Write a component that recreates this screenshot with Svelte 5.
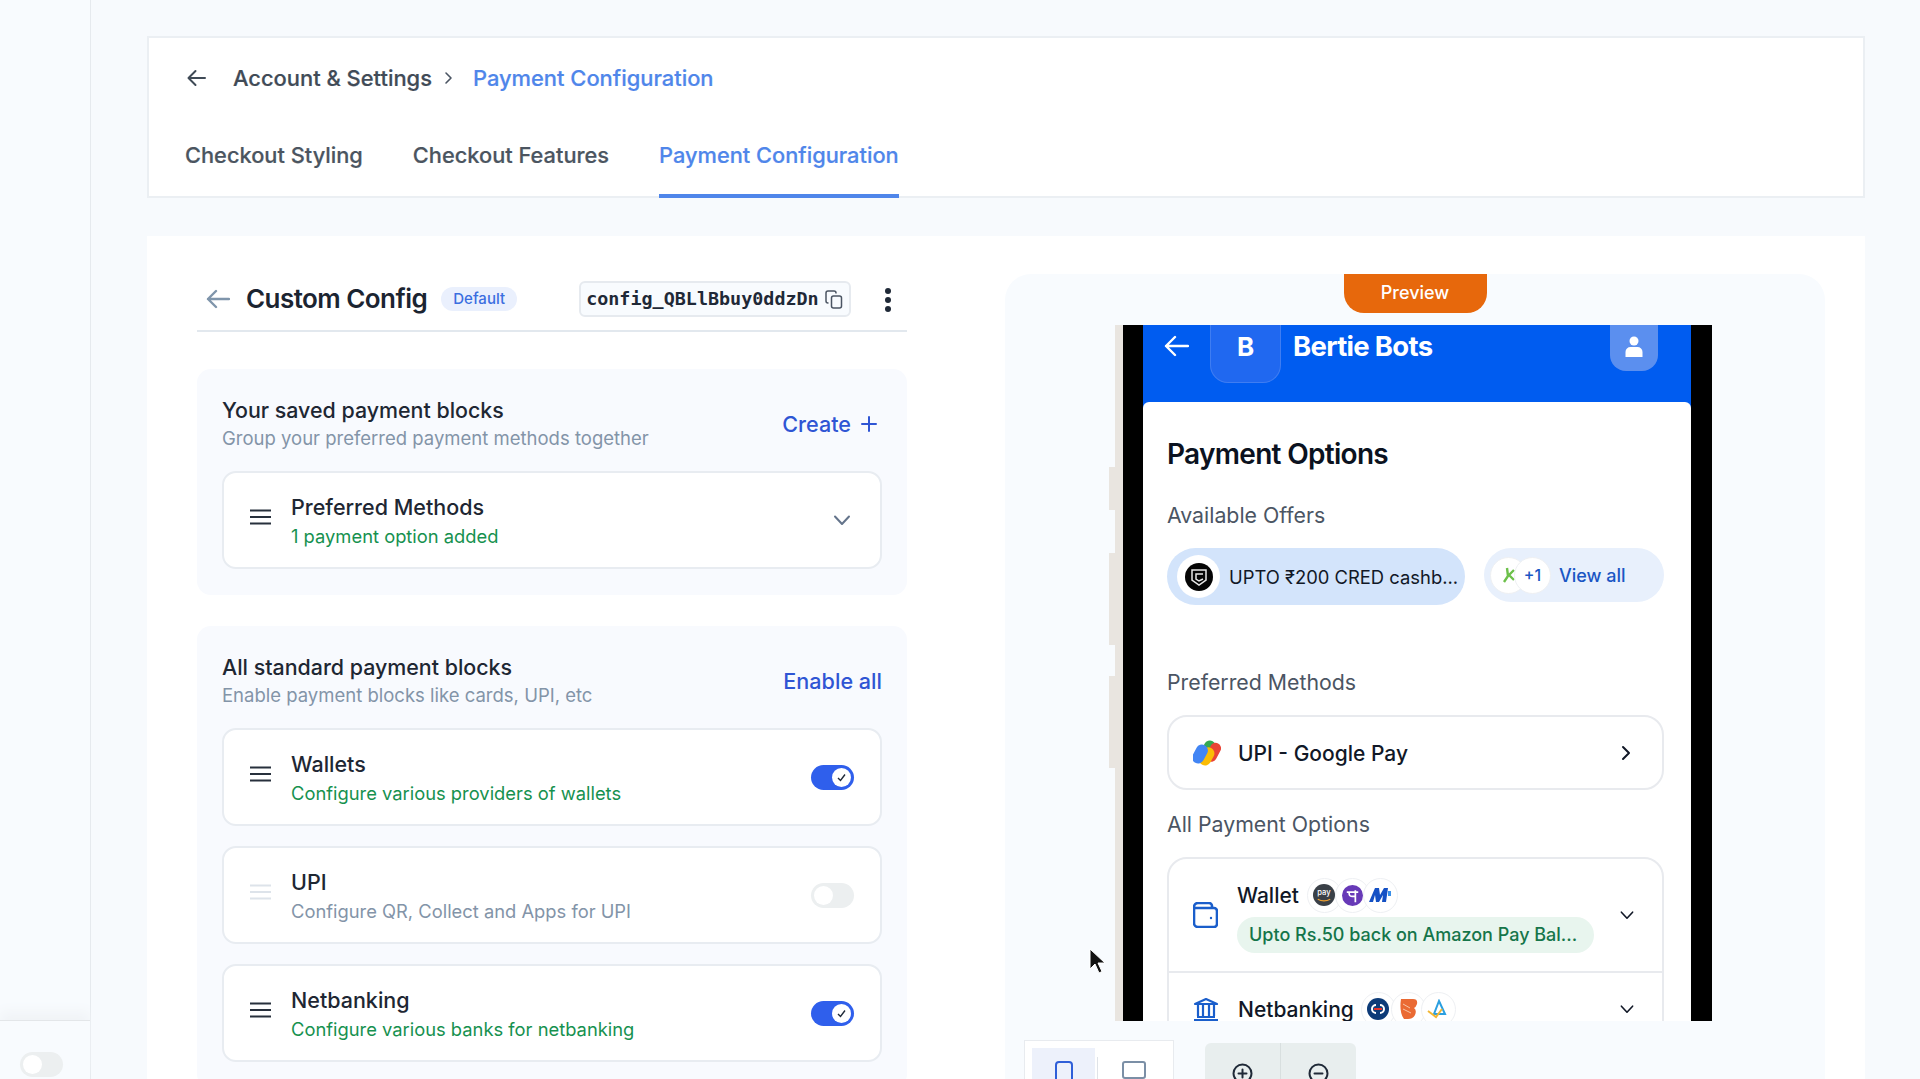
<script>
  const tabs = ['Checkout Styling', 'Checkout Features', 'Payment Configuration']
  const blocks = [
    { name: 'Wallets', desc: 'Configure various providers of wallets', on: true },
    { name: 'UPI', desc: 'Configure QR, Collect and Apps for UPI', on: false },
    { name: 'Netbanking', desc: 'Configure various banks for netbanking', on: true }
  ]
</script>

{#snippet burger(off)}
  <svg class="burger" class:off width="21" height="16" viewBox="0 0 21 16">
    <path d="M0 1.5h21M0 8h21M0 14.500h21" stroke="currentColor" stroke-width="2" fill="none" />
  </svg>
{/snippet}

{#snippet chevronDown(w, color)}
  <svg width={w} height={w} viewBox="0 0 20 20" fill="none" stroke={color} stroke-width="2" stroke-linecap="round" stroke-linejoin="round">
    <path d="M3 6.500l7 7.500 7-7.500" />
  </svg>
{/snippet}

<div class="app">
  <aside class="sidebar">
    <div class="sidebar-foot">
      <span class="toggle"><i></i></span>
    </div>
  </aside>

  <main class="main">
    <section class="topcard">
      <div class="crumbs">
        <svg class="crumb-back" width="19" height="18" viewBox="0 0 19 18" fill="none" stroke="#3f4a56" stroke-width="2" stroke-linecap="round" stroke-linejoin="round">
          <path d="M18 9H2M8.500 2L1.500 9l7 7" />
        </svg>
        <span class="crumb">Account &amp; Settings</span>
        <svg class="crumb-sep" width="9" height="14" viewBox="0 0 9 14" fill="none" stroke="#4b5563" stroke-width="1.600" stroke-linecap="round" stroke-linejoin="round">
          <path d="M2 2l5 5-5 5" />
        </svg>
        <span class="crumb active">Payment Configuration</span>
      </div>
      <nav class="tabs">
        {#each tabs as t, i}
          <span class="tab" class:current={i === 2}>{t}</span>
        {/each}
      </nav>
    </section>

    <section class="maincard">
      <div class="left">
        <header class="config-head">
          <svg class="config-back" width="24" height="20" viewBox="0 0 24 20" fill="none" stroke="#7f95ab" stroke-width="2.400" stroke-linecap="round" stroke-linejoin="round">
            <path d="M23 10H2M10 2l-8 8 8 8" />
          </svg>
          <h1>Custom Config</h1>
          <span class="badge">Default</span>
          <span class="code">
            config_QBLlBbuy0ddzDn
            <svg width="18" height="19" viewBox="0 0 18 19" fill="none" stroke="#4b5563" stroke-width="1.500" stroke-linejoin="round">
              <rect x="6.500" y="6" width="10" height="12" rx="2" />
              <path d="M3.500 13H3a2 2 0 0 1-2-2V3a2 2 0 0 1 2-2h6a2 2 0 0 1 2 2v.500" />
            </svg>
          </span>
          <span class="dots"><i></i><i></i><i></i></span>
        </header>

        <div class="block">
          <div class="block-head">
            <div>
              <h2>Your saved payment blocks</h2>
              <p>Group your preferred payment methods together</p>
            </div>
            <span class="link">Create
              <svg class="plus-icon" width="18" height="18" viewBox="0 0 18 18" stroke="#2f55d4" stroke-width="2" stroke-linecap="round"><path d="M9 2v14M2 9h14" /></svg>
            </span>
          </div>
          <div class="item">
            {@render burger(false)}
            <div class="item-text">
              <h3>Preferred Methods</h3>
              <p class="green">1 payment option added</p>
            </div>
            <span class="item-chev">{@render chevronDown(20, '#64748b')}</span>
          </div>
        </div>

        <div class="block">
          <div class="block-head">
            <div>
              <h2>All standard payment blocks</h2>
              <p>Enable payment blocks like cards, UPI, etc</p>
            </div>
            <span class="link">Enable all</span>
          </div>
          <div class="items">
            {#each blocks as b}
              <div class="item">
                {@render burger(!b.on)}
                <div class="item-text">
                  <h3>{b.name}</h3>
                  <p class:green={b.on}>{b.desc}</p>
                </div>
                <span class="toggle" class:on={b.on}>
                  <i>{#if b.on}<svg width="11" height="11" viewBox="0 0 11 11" fill="none" stroke="#1f2937" stroke-width="1.400"><path d="M2 6l2.500 2.500L9 2.500" /></svg>{/if}</i>
                </span>
              </div>
            {/each}
          </div>
        </div>
      </div>

      <div class="preview">
        <div class="preview-tab">Preview</div>
        <div class="phone">
          <span class="side-btn b1"></span>
          <span class="side-btn b2"></span>
          <span class="side-btn b3"></span>
          <div class="screen">
            <div class="bar">
              <svg class="bar-back" width="25" height="22" viewBox="0 0 25 22" fill="none" stroke="#fff" stroke-width="2.400" stroke-linecap="round" stroke-linejoin="round">
                <path d="M24 11H2M11 2l-9 9 9 9" />
              </svg>
              <div class="logo">B</div>
              <div class="merchant">Bertie Bots</div>
              <div class="avatar">
                <svg width="20" height="22" viewBox="0 0 20 22" fill="#fff"><circle cx="10" cy="5" r="4.500" /><path d="M1.500 21v-5a5 5 0 0 1 5-5h7a5 5 0 0 1 5 5v5z" /></svg>
              </div>
            </div>
            <div class="sheet">
              <h2 class="sheet-title">Payment Options</h2>
              <div class="sheet-label first">Available Offers</div>
              <div class="offers">
                <div class="offer">
                  <span class="offer-icon">
                    <svg width="28" height="28" viewBox="0 0 28 28">
                      <circle cx="14" cy="14" r="14" fill="#050505" />
                      <path d="M7 7h14v10l-7 5-7-5z" fill="none" stroke="#e8e8e8" stroke-width="1.500" />
                      <path d="M18 11h-7v5l3 2 4-2" fill="none" stroke="#e8e8e8" stroke-width="1.500" />
                    </svg>
                  </span>
                  <span>UPTO ₹200 CRED cashb...</span>
                </div>
                <div class="viewall">
                  <span class="stack">
                    <span class="mini">
                      <svg width="14" height="16" viewBox="0 0 14 16" fill="none" stroke="#6cc04a" stroke-width="2.400"><path d="M5 1l1 8-4 6M12 3L7 8l5 5" /></svg>
                    </span>
                    <span class="mini plus">+1</span>
                  </span>
                  <span class="viewall-text">View all</span>
                </div>
              </div>

              <div class="sheet-label pref">Preferred Methods</div>
              <div class="gpay">
                <svg width="28" height="26" viewBox="0 0 28 26">
                  <rect x="9" y="0" width="12" height="20" rx="6" transform="rotate(28 15 10)" fill="#34a853" />
                  <rect x="15" y="2" width="11" height="20" rx="5.500" transform="rotate(28 20 12)" fill="#ea4335" />
                  <rect x="8" y="7" width="12" height="19" rx="6" transform="rotate(28 14 16)" fill="#fbbc04" />
                  <rect x="1" y="4" width="12" height="20" rx="6" transform="rotate(28 7 14)" fill="#4285f4" />
                </svg>
                <span class="gpay-name">UPI - Google Pay</span>
                <svg width="10" height="16" viewBox="0 0 10 16" fill="none" stroke="#111827" stroke-width="2" stroke-linecap="round" stroke-linejoin="round"><path d="M2 2l6 6-6 6" /></svg>
              </div>

              <div class="sheet-label all">All Payment Options</div>
              <div class="methods">
                <div class="method wallet">
                  <svg width="25" height="26" viewBox="0 0 25 26" fill="none" stroke="#1a5ecb" stroke-width="2.600" stroke-linejoin="round">
                    <path d="M19 6V4a3 3 0 0 0-3-3H5a4 4 0 0 0-4 4v16a4 4 0 0 0 4 4h16a3 3 0 0 0 3-3V9a3 3 0 0 0-3-3H1" />
                    <circle cx="18" cy="16" r="1.200" fill="#1a5ecb" stroke="none" />
                  </svg>
                  <div class="method-text">
                    <div class="method-title">
                      <span>Wallet</span>
                      <span class="logos wallet-logos">
                        <span class="mini">
                          <svg width="22" height="22" viewBox="0 0 23 23">
                            <circle cx="11.500" cy="11.500" r="11.500" fill="#3a4047" />
                            <text x="11.500" y="12" text-anchor="middle" font-size="8" fill="#fff" font-family="Inter">pay</text>
                            <path d="M5 16q6.500 3.500 13 0" stroke="#f0a030" stroke-width="1.300" fill="none" />
                          </svg>
                        </span>
                        <span class="mini">
                          <svg width="21" height="21" viewBox="0 0 22 22">
                            <circle cx="11" cy="11" r="11" fill="#6739b7" />
                            <path d="M5 7.500h12M7.500 7.500q-.5 4.500 3 4.500h3.500M14 5.500V18" stroke="#fff" stroke-width="1.800" fill="none" />
                          </svg>
                        </span>
                        <span class="mini">
                          <svg width="23" height="16" viewBox="0 0 23 16">
                            <path d="M0 15L6 1h4l1 7 4-7h4l-2 14h-4l1-7-4 7H7l-1-7-2 7z" fill="#1450c4" />
                            <path d="M19 4h3v5h-3z" fill="#3a8fe8" />
                          </svg>
                        </span>
                      </span>
                    </div>
                    <div class="method-offer">Upto Rs.50 back on Amazon Pay Bal...</div>
                  </div>
                  {@render chevronDown(16, '#111827')}
                </div>
                <div class="method bank">
                  <svg width="26" height="24" viewBox="0 0 26 24" fill="none" stroke="#1a5ecb" stroke-width="2.200" stroke-linejoin="round">
                    <path d="M2 7l11-5 11 5zM1 23h24M4 20h18M5 8v11M10 8v11M16 8v11M21 8v11" />
                  </svg>
                  <div class="method-title">
                    <span>Netbanking</span>
                    <span class="logos bank-logos">
                      <span class="mini">
                        <svg width="22" height="22" viewBox="0 0 22 22">
                          <circle cx="11" cy="11" r="11" fill="#0d3b78" />
                          <path d="M9 7a4 4 0 1 0 0 8M13 7a4 4 0 1 1 0 8" stroke="#fff" stroke-width="2" fill="none" />
                          <path d="M7 11h8" stroke="#e3332c" stroke-width="2" />
                        </svg>
                      </span>
                      <span class="mini">
                        <svg width="22" height="22" viewBox="0 0 22 22">
                          <path d="M4 1h12q5 0 4 5-1 3-3 4 3 2 1 7-2 4-7 4H7Q2 14 4 1z" fill="#ea6a33" />
                          <path d="M6 6l7 4M6 11l8 4" stroke="#f7c6a8" stroke-width="1" />
                        </svg>
                      </span>
                      <span class="mini">
                        <svg width="22" height="20" viewBox="0 0 22 20" fill="none" stroke-width="2">
                          <path d="M12 2l6 13H7z" stroke="#2b9fe0" />
                          <path d="M1 12l8 6 6-8" stroke="#f2b632" />
                        </svg>
                      </span>
                    </span>
                  </div>
                  {@render chevronDown(16, '#111827')}
                </div>
              </div>
            </div>
          </div>
        </div>

        <div class="tools">
          <div class="devices">
            <span class="device active">
              <svg width="18" height="28" viewBox="0 0 18 28" fill="none" stroke="#2f5fd8" stroke-width="2"><rect x="1" y="1" width="16" height="26" rx="3" /></svg>
            </span>
            <span class="device-sep"></span>
            <span class="device">
              <svg width="24" height="24" viewBox="0 0 24 24" fill="none" stroke="#7b8fa6" stroke-width="2"><rect x="1" y="1" width="22" height="16" rx="2" /><path d="M12 17v5M7 22h10" /></svg>
            </span>
          </div>
          <div class="zoomer">
            <span class="zoom-btn">
              <svg width="22" height="24" viewBox="0 0 22 24" fill="none" stroke="#1f2937" stroke-width="2" stroke-linecap="round"><circle cx="10.500" cy="10.500" r="9" /><path d="M6.500 10.500h8M10.500 6.500v8M17 17l4 4" /></svg>
            </span>
            <span class="zoom-btn">
              <svg width="22" height="24" viewBox="0 0 22 24" fill="none" stroke="#1f2937" stroke-width="2" stroke-linecap="round"><circle cx="10.500" cy="10.500" r="9" /><path d="M6.500 10.500h8M17 17l4 4" /></svg>
            </span>
          </div>
        </div>

        <svg class="cursor" width="17" height="26" viewBox="0 0 17 26">
          <path d="M1 1v20l5-5 4 9 3-1.500-4-8.500h7z" fill="#111" stroke="#fff" stroke-width="1" />
        </svg>
      </div>
    </section>
  </main>
</div>

<style>
  :global(body) {
    background: #f8fbfe;
    font-family: Inter, "Liberation Sans", sans-serif;
    color: #1f2937;
  }

  h1, h2, h3, p { margin: 0; }

  .app {
    display: flex;
    height: 1079px;
    overflow: hidden;
  }

  .sidebar {
    width: 90px;
    flex: none;
    border-right: 1px solid #e6eaee;
    display: flex;
    flex-direction: column;
    justify-content: flex-end;
  }

  .sidebar-foot {
    height: 59px;
    box-sizing: border-box;
    border-top: 1px solid #e3e6e9;
    box-shadow: 0 -8px 12px #f0f3f6;
    padding: 31px 0 0 20px;
  }

  .main {
    flex: 1;
    min-width: 0;
    padding: 36px 55px 0 56px;
    background: #f7fafd;
  }

  .topcard {
    height: 162px;
    box-sizing: border-box;
    background: #fff;
    border: 2px solid #ebeff3;
    display: flex;
    flex-direction: column;
    padding-left: 36px;
  }

  .crumbs {
    height: 80px;
    flex: none;
    display: flex;
    align-items: center;
    font-size: 21.900px;
    font-weight: 500;
    -webkit-text-stroke: 0.2px currentColor;
  }

  .crumb-back { margin-left: 2px; margin-right: 27px; }
  .crumb { color: #414b57; }
  .crumb.active { color: #4f86ea; }
  .crumb-sep { margin: 0 20px 0 12px; }

  .tabs {
    display: flex;
    gap: 50px;
  }

  .tab {
    font-size: 21.800px;
    font-weight: 500;
    -webkit-text-stroke: 0.2px currentColor;
    color: #4b5560;
    padding-top: 24px;
    box-sizing: border-box;
    height: 80px;
  }

  .tab.current {
    color: #4f86ea;
    border-bottom: 4px solid #4f86ea;
  }

  .maincard {
    margin-top: 38px;
    background: #fff;
    height: 900px;
    display: flex;
    padding: 38px 38px 0 50px;
    gap: 98px;
  }

  .left {
    width: 710px;
    flex: none;
    padding-top: 7px;
  }

  .config-head {
    height: 49px;
    border-bottom: 2px solid #e2e8ee;
    margin-bottom: 37px;
    display: flex;
    align-items: flex-start;
    padding-left: 9px;
  }

  .config-back { margin-top: 8px; margin-right: 16px; }

  .config-head h1 {
    font-size: 26px;
    font-weight: 600;
    line-height: 36px;
    color: #1b2431;
    letter-spacing: -0.55px;
  }

  .badge {
    margin: 6px 0 0 14px;
    height: 24px;
    width: 76px;
    border-radius: 12px;
    background: #eaf0fd;
    color: #3a6ee0;
    font-size: 15px;
    font-weight: 500;
    line-height: 24px;
    text-align: center;
  }

  .code {
    margin-left: 62px;
    width: 272px;
    height: 36px;
    box-sizing: border-box;
    border: 2px solid #e6eaef;
    border-radius: 6px;
    background: #f8fbfe;
    font-family: "DejaVu Sans Mono", "Liberation Mono", monospace;
    font-size: 18.400px;
    font-weight: 700;
    line-height: 32px;
    color: #1f2937;
    display: flex;
    align-items: center;
    justify-content: space-between;
    padding: 0 6px 0 5px;
    white-space: nowrap;
  }

  .dots {
    margin: 7px 0 0 34px;
    display: flex;
    flex-direction: column;
    gap: 3px;
  }

  .dots i {
    width: 6px;
    height: 6px;
    border-radius: 50%;
    background: #1f2937;
  }

  .block {
    background: #f8fafe;
    border-radius: 14px;
    padding: 27px 25px 26px 25px;
    margin-bottom: 31px;
  }

  .block-head {
    display: flex;
    justify-content: space-between;
    align-items: center;
    margin-bottom: 19px;
  }

  .block-head h2 {
    font-size: 21.400px;
    font-weight: 500;
    line-height: 28px;
    color: #1e2733;
  }

  .block-head p {
    font-size: 18.500px;
    line-height: 28px;
    color: #8394a8;
  }

  .link {
    font-size: 21.600px;
    font-weight: 500;
    color: #2f55d4;
    display: flex;
    align-items: center;
    gap: 9px;
  }

  .plus-icon { margin-right: 4px; }

  .items {
    display: flex;
    flex-direction: column;
    gap: 20px;
  }

  .item {
    height: 98px;
    box-sizing: border-box;
    background: #fff;
    border: 2px solid #e8ecf1;
    border-radius: 14px;
    display: flex;
    align-items: center;
    padding: 0 26px 0 26px;
  }

  .burger { color: #27303c; flex: none; margin-top: -6px; }
  .burger.off { color: #dde3ea; }

  .item-text { flex: 1; margin: 2px 0 0 20px; }

  .item-chev { display: flex; margin-right: 2px; }

  .item h3 {
    font-size: 21.500px;
    font-weight: 500;
    line-height: 28px;
    color: #1e2733;
  }

  .item p {
    font-size: 18.350px;
    line-height: 28px;
    color: #8394a8;
    margin-top: 1px;
  }

  .item p.green { color: #16914f; }

  .toggle {
    width: 43px;
    height: 25px;
    border-radius: 13px;
    background: #eceff0;
    display: flex;
    align-items: center;
    padding: 0 3px;
    box-sizing: border-box;
  }

  .toggle i {
    width: 19px;
    height: 19px;
    border-radius: 50%;
    background: #fff;
    display: flex;
    align-items: center;
    justify-content: center;
  }

  .toggle.on {
    background: #2f5fec;
    justify-content: flex-end;
  }

  .preview {
    width: 820px;
    flex: none;
    background: #f8fbfe;
    border-radius: 26px 26px 0 0;
    position: relative;
    display: flex;
    flex-direction: column;
  }

  .preview-tab {
    align-self: center;
    width: 143px;
    height: 39px;
    background: #e7680c;
    color: #fff;
    font-size: 18px;
    font-weight: 500;
    line-height: 38px;
    text-align: center;
    border-radius: 0 0 20px 20px;
  }

  .phone {
    margin: 12px 0 0 110px;
    width: 597px;
    height: 696px;
    flex: none;
    box-sizing: border-box;
    border-left: 8px solid #e9e5e0;
    position: relative;
  }

  .side-btn {
    position: absolute;
    left: -14px;
    width: 6px;
    background: #e9e5e0;
  }

  .b1 { top: 142px; height: 43px; }
  .b2 { top: 228px; height: 92px; }
  .b3 { top: 351px; height: 92px; }

  .screen {
    height: 100%;
    box-sizing: border-box;
    border-left: 20px solid #000;
    border-right: 21px solid #000;
    background: #005cf0;
    overflow: hidden;
    display: flex;
    flex-direction: column;
  }

  .bar {
    height: 77px;
    flex: none;
    display: flex;
    align-items: flex-start;
    color: #fff;
  }

  .bar-back { margin: 10px 0 0 21px; }

  .logo {
    margin-left: 21px;
    width: 71px;
    height: 58px;
    box-sizing: border-box;
    background: #2068f0;
    border: 1px solid #3f7df2;
    border-top: 0;
    border-radius: 0 0 18px 18px;
    font-size: 26px;
    font-weight: 700;
    line-height: 43px;
    text-align: center;
  }

  .merchant {
    margin-left: 12px;
    font-size: 27.500px;
    font-weight: 700;
    line-height: 42px;
    letter-spacing: -0.7px;
  }

  .avatar {
    margin-left: auto;
    margin-right: 33px;
    width: 48px;
    height: 46px;
    background: #5b8fef;
    border-radius: 0 0 16px 16px;
    display: flex;
    justify-content: center;
    padding-top: 11px;
    box-sizing: border-box;
  }

  .sheet {
    flex: 1;
    background: #fff;
    border-radius: 6px 6px 0 0;
    padding: 34px 27px 0 24px;
  }

  .sheet-title {
    font-size: 28px;
    font-weight: 600;
    line-height: 36px;
    color: #0b1220;
    letter-spacing: -0.7px;
  }

  .sheet-label {
    font-size: 21.300px;
    line-height: 26px;
    color: #4b5563;
  }

  .sheet-label.first { margin-top: 30px; }
  .sheet-label.pref { margin-top: 64px; }
  .sheet-label.all { margin-top: 21px; }

  .offers {
    margin-top: 20px;
    display: flex;
    gap: 19px;
    align-items: flex-start;
  }

  .offer {
    width: 298px;
    height: 57px;
    flex: none;
    box-sizing: border-box;
    background: #d3e4fb;
    border-radius: 29px;
    display: flex;
    align-items: center;
    gap: 9px;
    padding-left: 10px;
    font-size: 18.400px;
    color: #111827;
    white-space: nowrap;
  }

  .offer-icon {
    width: 43px;
    height: 43px;
    border-radius: 50%;
    background: #fff;
    display: flex;
    align-items: center;
    justify-content: center;
  }

  .viewall {
    flex: 1;
    height: 54px;
    background: #e8f0fc;
    border-radius: 27px;
    display: flex;
    align-items: center;
    padding-left: 6px;
    gap: 8px;
  }

  .stack { display: flex; }

  .stack .mini {
    width: 37px;
    height: 37px;
  }

  .stack .mini + .mini { margin-left: -13px; }

  .mini {
    width: 35px;
    height: 35px;
    border-radius: 50%;
    background: #fff;
    border: 1px solid #eef0f3;
    box-sizing: border-box;
    display: flex;
    align-items: center;
    justify-content: center;
    flex: none;
  }

  .plus {
    color: #1a56c4;
    font-size: 16px;
    font-weight: 500;
  }

  .viewall-text {
    color: #1a56c4;
    font-size: 18px;
    font-weight: 500;
  }

  .gpay {
    margin-top: 20px;
    height: 75px;
    box-sizing: border-box;
    border: 2px solid #e8eaee;
    border-radius: 20px;
    display: flex;
    align-items: center;
    padding: 1px 31px 0 24px;
  }

  .gpay-name {
    flex: 1;
    margin-left: 17px;
    font-size: 21px;
    font-weight: 500;
    color: #111827;
  }

  .methods {
    margin-top: 20px;
    border: 2px solid #e8eaee;
    border-radius: 20px;
    display: flex;
    flex-direction: column;
  }

  .method {
    display: flex;
    padding: 0 27px 0 24px;
    align-items: center;
    gap: 19px;
  }

  .method.wallet {
    height: 112px;
    border-bottom: 2px solid #e8eaee;
  }

  .method.bank { height: 72px; }

  .method-text { flex: 1; }

  .method-title {
    flex: 1;
    display: flex;
    align-items: center;
    gap: 6px;
    font-size: 21px;
    font-weight: 500;
    color: #111827;
  }

  .logos { display: flex; }
  .wallet-logos { margin-left: 2px; }
  .wallet-logos .mini + .mini { margin-left: -7px; }
  .bank-logos { margin-left: 1px; }
  .bank-logos .mini + .mini { margin-left: -5px; }

  .method-offer {
    margin-top: 4px;
    width: 357px;
    height: 36px;
    box-sizing: border-box;
    background: #e8f5ee;
    border-radius: 18px;
    color: #15754a;
    font-size: 18px;
    font-weight: 500;
    line-height: 36px;
    padding-left: 12px;
    white-space: nowrap;
  }

  .tools {
    margin: 19px 0 0 19px;
    display: flex;
    gap: 31px;
    align-items: flex-start;
  }

  .devices {
    width: 150px;
    height: 60px;
    box-sizing: border-box;
    background: #fff;
    border: 1px solid #e8ebef;
    padding: 7px;
    display: flex;
  }

  .device {
    width: 64px;
    display: flex;
    justify-content: center;
    padding-top: 13px;
  }

  .device.active { background: #edf1fb; }

  .device-sep {
    width: 1px;
    margin: 9px 5px 0 2px;
    background: #dfe3e8;
  }

  .zoomer {
    margin-top: 3px;
    width: 151px;
    height: 60px;
    background: #e8eeee;
    border-radius: 6px 6px 0 0;
    display: flex;
  }

  .zoom-btn {
    flex: 1;
    display: flex;
    justify-content: center;
    padding-top: 20px;
  }

  .zoom-btn + .zoom-btn { border-left: 1px solid #d8dfdf; }

  .cursor {
    position: absolute;
    left: 84px;
    top: 674px;
  }
</style>
